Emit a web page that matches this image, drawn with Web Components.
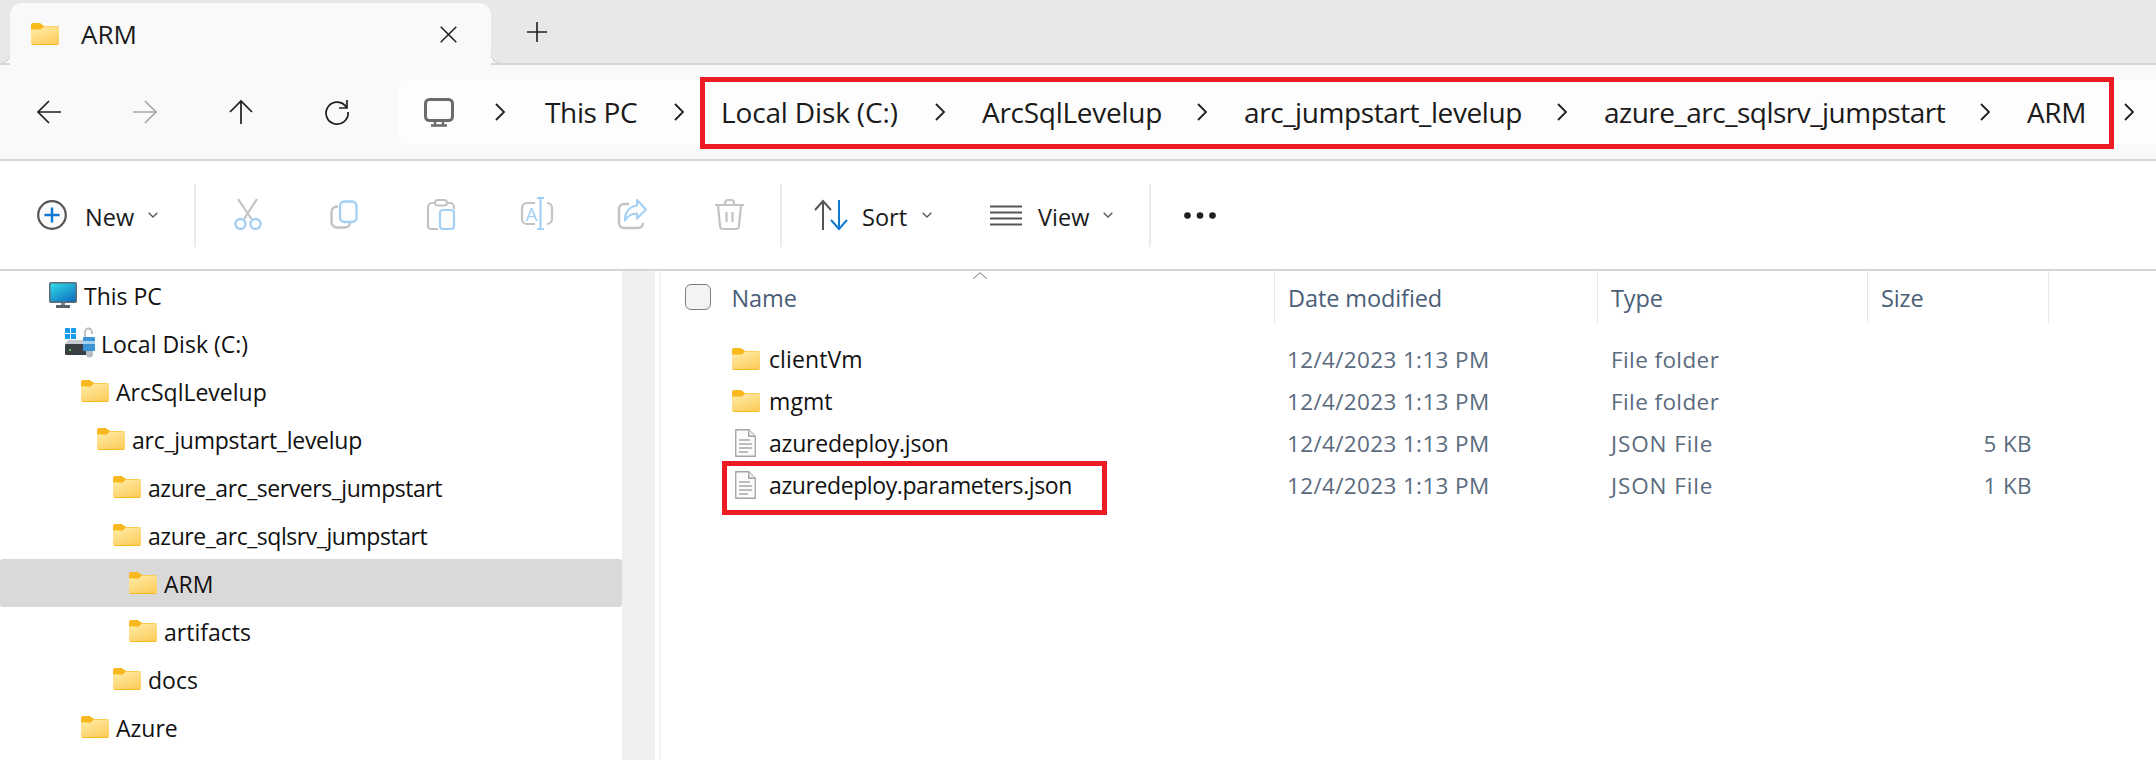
<!DOCTYPE html>
<html>
<head>
<meta charset="utf-8">
<title>ARM</title>
<style>
  html, body { margin: 0; height: 100%; overflow: hidden; background: white; }
  body { font-family: "Open Sans", "Liberation Sans", sans-serif; color: #1a1a1a; }
</style>
</head>
<body>
<explorer-window>
  <tab-strip slot="tabs"></tab-strip>
  <nav-bar slot="nav">
    <bread-crumb w="95" style="--pad:3px">This PC</bread-crumb>
    <bread-crumb w="177" style="letter-spacing:-0.15px">Local Disk (C:)</bread-crumb>
    <bread-crumb w="178" style="letter-spacing:-0.27px">ArcSqlLevelup</bread-crumb>
    <bread-crumb w="276" style="letter-spacing:-0.4px">arc_jumpstart_levelup</bread-crumb>
    <bread-crumb w="339" style="letter-spacing:-0.5px">azure_arc_sqlsrv_jumpstart</bread-crumb>
    <bread-crumb w="60">ARM</bread-crumb>
  </nav-bar>
  <tool-bar slot="tools"></tool-bar>
  <tree-pane slot="tree">
    <tree-row level="0" icon="pc">This PC</tree-row>
    <tree-row level="1" icon="disk">Local Disk (C:)</tree-row>
    <tree-row level="2" icon="folder">ArcSqlLevelup</tree-row>
    <tree-row level="3" icon="folder" style="letter-spacing:-0.25px">arc_jumpstart_levelup</tree-row>
    <tree-row level="4" icon="folder" style="letter-spacing:-0.45px">azure_arc_servers_jumpstart</tree-row>
    <tree-row level="4" icon="folder" style="letter-spacing:-0.45px">azure_arc_sqlsrv_jumpstart</tree-row>
    <tree-row level="5" icon="folder" selected>ARM</tree-row>
    <tree-row level="5" icon="folder">artifacts</tree-row>
    <tree-row level="4" icon="folder">docs</tree-row>
    <tree-row level="2" icon="folder">Azure</tree-row>
  </tree-pane>
  <file-list slot="files">
    <file-row icon="folder" date="12/4/2023 1:13 PM" type="File folder" style="letter-spacing:0.1px">clientVm</file-row>
    <file-row icon="folder" date="12/4/2023 1:13 PM" type="File folder" style="letter-spacing:0.1px">mgmt</file-row>
    <file-row icon="doc" date="12/4/2023 1:13 PM" type="JSON File" size="5 KB" style="letter-spacing:-0.2px">azuredeploy.json</file-row>
    <file-row icon="doc" date="12/4/2023 1:13 PM" type="JSON File" size="1 KB" style="letter-spacing:-0.4px">azuredeploy.parameters.json</file-row>
  </file-list>
</explorer-window>

<script>
const GRAY = "#c3c3c3";
const SKY = "#a5d0f3";

const ICONS = {
  folder: [28, 22, `
    <defs><linearGradient id="fg" x1="0.2" y1="0" x2="0.8" y2="1"><stop offset="0" stop-color="#ffeaa6"/><stop offset="1" stop-color="#fdcd5c"/></linearGradient></defs>
    <path d="M0 2a2 2 0 0 1 2-2h7l4 3h13a2 2 0 0 1 2 2v15a2 2 0 0 1-2 2H2a2 2 0 0 1-2-2z" fill="#f9b81e"/>
    <path d="M0 6.500h10l3-3h13.500a1.500 1.500 0 0 1 1.500 1.500V20a1 1 0 0 1-1 1H1a1 1 0 0 1-1-1z" fill="url(#fg)"/>`],
  doc: [21, 28, `
    <path d="M.75.75h13l6.500 6.500v20H.75z" fill="#fbfbfb" stroke="#a3a3a3" stroke-width="1.300"/>
    <path d="M13.750.75v6.500h6.500" fill="#ececec" stroke="#a3a3a3" stroke-width="1.300"/>
    <path d="M4 11h11M4 15h13M4 19h13M4 23h9" stroke="#bdbdbd" stroke-width="2"/>`],
  pc: [28, 26, `
    <defs><linearGradient id="sc" x1="0.1" y1="0" x2="0.8" y2="1"><stop offset="0" stop-color="#33d9e8"/><stop offset="1" stop-color="#0f72c0"/></linearGradient></defs>
    <rect x=".75" y=".75" width="26.500" height="19.500" rx="1" fill="url(#sc)" stroke="#5f6b75" stroke-width="1.500"/>
    <path d="M12 21h4v2h-4z" fill="#7c868e"/><path d="M7 23h14v3H7z" fill="#59636b"/>`],
  disk: [31, 32, `
    <path d="M0 1h5v5H0zM6 1h5v5H6zM0 7h5v5H0zM6 7h5v5H6z" fill="#1a9bec"/>
    <path d="M0 17l3-4h20v4z" fill="#c8ccd0"/>
    <rect x="0" y="17" width="26" height="11" rx="1" fill="#3a3f44"/>
    <circle cx="5" cy="23" r="1.100" fill="#5fe36a"/>
    <path d="M20 10V5a3.500 3.500 0 0 1 7 0v2" fill="none" stroke="#b6bcc2" stroke-width="1.800"/>
    <rect x="18" y="10" width="12" height="14" rx="1" fill="#3c94d6"/><path d="M18 14h12v3H18z" fill="#a7d3f2"/>
    <path d="M21 24h7v3a3 3 0 0 1-7 0z" fill="#b5bbc0"/>`],
  back: [24, 24, `<path d="M24 12H1M12 1 1 12l11 11" fill="none" stroke="#1f1f1f" stroke-width="1.700"/>`],
  forward: [24, 24, `<path d="M0 12h23M12 1l11 11-11 11" fill="none" stroke="#a8a8a8" stroke-width="1.700"/>`],
  up: [24, 24, `<path d="M12 24V1M1 12 12 1l11 11" fill="none" stroke="#1f1f1f" stroke-width="1.700"/>`],
  refresh: [24, 24, `<path d="M21.500 7.500A11 11 0 1 0 23 12" fill="none" stroke="#1f1f1f" stroke-width="1.700"/><path d="M22 0v8h-8" fill="none" stroke="#1f1f1f" stroke-width="1.700"/>`],
  monitor: [30, 29, `<rect x="1.500" y="1.500" width="27" height="21" rx="4" fill="none" stroke="#6b6b6b" stroke-width="3"/><path d="M11 23v4M19 23v4M7 27.500h16" fill="none" stroke="#6b6b6b" stroke-width="2.400"/>`],
  chevron: [10, 18, `<path d="M1 1l8 8-8 8" fill="none" stroke="#1f1f1f" stroke-width="1.800"/>`],
  close: [17, 17, `<path d="M.7.7l15.600 15.600M16.300.7.7 16.300" fill="none" stroke="#1f1f1f" stroke-width="1.500"/>`],
  plus: [20, 20, `<path d="M10 0v20M0 10h20" fill="none" stroke="#1f1f1f" stroke-width="1.600"/>`],
  caret: [10, 6, `<path d="M.7.7 5 5 9.300.7" fill="none" stroke="#555" stroke-width="1.300"/>`],
  sortcaret: [14, 7, `<path d="M.5 6.500 7 .7l6.500 5.800" fill="none" stroke="#6e6e6e" stroke-width="1"/>`],
  add: [30, 30, `<circle cx="15" cy="15" r="13.800" fill="#fafafa" stroke="#555" stroke-width="2.200"/><path d="M15 7.500v15M7.500 15h15" stroke="#0f78d4" stroke-width="2.400"/>`],
  cut: [28, 31, `<path d="M4 0l13.500 20M23 0 10 20" fill="none" stroke="${GRAY}" stroke-width="2.200"/><circle cx="6.500" cy="25" r="5" fill="none" stroke="${SKY}" stroke-width="2.400"/><circle cx="21.500" cy="25" r="5" fill="none" stroke="${SKY}" stroke-width="2.400"/>`],
  copy: [28, 29, `<path d="M8 6.500H7a5.500 5.500 0 0 0-5.500 5.500v10a5.500 5.500 0 0 0 5.500 5.500h8a5 5 0 0 0 5-5" fill="none" stroke="${GRAY}" stroke-width="2.400"/><rect x="10" y="1.500" width="16.500" height="20.500" rx="4.500" fill="#fdfdfd" stroke="${SKY}" stroke-width="2.400"/>`],
  paste: [28, 31, `<path d="M8 4H5a4 4 0 0 0-4 4v19a3 3 0 0 0 3 3h7M20 4h3a4 4 0 0 1 4 4v2" fill="none" stroke="${GRAY}" stroke-width="2.200"/><rect x="8" y="1" width="12" height="5.500" rx="2.700" fill="none" stroke="${GRAY}" stroke-width="2"/><rect x="13" y="11" width="14" height="19" rx="3" fill="#fdfdfd" stroke="${SKY}" stroke-width="2.200"/>`],
  rename: [32, 32, `<path d="M14 5H6a5 5 0 0 0-5 5v11a5 5 0 0 0 5 5h8M26 5a5 5 0 0 1 5 5v11a5 5 0 0 1-5 5" fill="none" stroke="${GRAY}" stroke-width="2.200"/><path d="M16 0h7M19.500 0v31M16 31h7" fill="none" stroke="${SKY}" stroke-width="2.200"/><text x="4.500" y="22.500" font-family="Open Sans" font-size="19" fill="${SKY}">A</text>`],
  share: [29, 30, `<path d="M11 5H6a5 5 0 0 0-5 5v14a5 5 0 0 0 5 5h14a5 5 0 0 0 5-5" fill="none" stroke="${GRAY}" stroke-width="2.400"/><path d="M19 1l9 9.500-9 9v-5c-6 0-9 2-12 7 0-8 4-14 12-15z" fill="#fdfdfd" stroke="${SKY}" stroke-width="2.200" stroke-linejoin="round"/>`],
  trash: [29, 31, `<path d="M0 6h29M10 6V4a3 3 0 0 1 3-3h3a3 3 0 0 1 3 3v2M3 6l2 21a3 3 0 0 0 3 3h13a3 3 0 0 0 3-3l2-21M11.500 13v10M17.500 13v10" fill="none" stroke="${GRAY}" stroke-width="2.200"/>`],
  sort: [34, 30, `<path d="M9 30V1M1 10l8-9 8 9" fill="none" stroke="#555" stroke-width="2"/><path d="M25 0v29M17 20l8 9 8-9" fill="none" stroke="#0f78d4" stroke-width="2"/>`],
  view: [32, 21, `<path d="M0 1.500h32M0 7.500h32M0 13.500h32M0 19.500h32" stroke="#555" stroke-width="2.200"/>`],
  dots: [32, 7, `<circle cx="3.500" cy="3.500" r="3.300" fill="#1f1f1f"/><circle cx="16" cy="3.500" r="3.300" fill="#1f1f1f"/><circle cx="28.500" cy="3.500" r="3.300" fill="#1f1f1f"/>`],
};

function icon(name) {
  const [w, h, body] = ICONS[name];
  return `<svg width="${w}" height="${h}" viewBox="0 0 ${w} ${h}" style="display:block;flex:none;overflow:visible">${body}</svg>`;
}

customElements.define("explorer-window", class extends HTMLElement {
  constructor() {
    super();
    this.shadow = this.attachShadow({ mode: "open" });
  }

  connectedCallback() {
    this.shadow.innerHTML = `
      <style>
        :host { display: flex; flex-direction: column; width: 2156px; height: 760px; overflow: hidden; background: white; }
        .body { flex: 1; display: flex; min-height: 0; }
      </style>
      <slot name="tabs"></slot>
      <slot name="nav"></slot>
      <slot name="tools"></slot>
      <div class="body">
        <slot name="tree"></slot>
        <slot name="files"></slot>
      </div>
    `;
  }
});

customElements.define("tab-strip", class extends HTMLElement {
  constructor() {
    super();
    this.shadow = this.attachShadow({ mode: "open" });
  }

  connectedCallback() {
    this.shadow.innerHTML = `
      <style>
        :host { display: flex; align-items: flex-end; box-sizing: border-box; height: 65px; background: #e8e8e8; border-bottom: 2px solid #d6d6d6; }
        .tab { position: relative; display: flex; align-items: center; box-sizing: border-box; width: 481px; height: 62px; margin-left: 10px; margin-bottom: -2px; padding: 0 34px 0 21px; background: #f9f9f9; border-radius: 12px 12px 0 0; }
        .tab::before, .tab::after { content: ""; position: absolute; bottom: 2px; width: 8px; height: 8px; }
        .tab::before { left: -8px; background: radial-gradient(circle at 0 0, transparent 7px, #d6d6d6 7px, #d6d6d6 8px, #f9f9f9 8px); }
        .tab::after { right: -8px; background: radial-gradient(circle at 100% 0, transparent 7px, #d6d6d6 7px, #d6d6d6 8px, #f9f9f9 8px); }
        .name { margin-left: 22px; font-size: 26px; }
        .x { margin-left: auto; }
        .plus { align-self: center; margin-left: 36px; }
      </style>
      <div class="tab">${icon("folder")}<span class="name">ARM</span><span class="x">${icon("close")}</span></div>
      <span class="plus">${icon("plus")}</span>
    `;
  }
});

customElements.define("nav-bar", class extends HTMLElement {
  constructor() {
    super();
    this.shadow = this.attachShadow({ mode: "open" });
  }

  connectedCallback() {
    this.shadow.innerHTML = `
      <style>
        :host { position: relative; display: flex; align-items: center; box-sizing: border-box; height: 96px; padding-left: 37px; background: #f9f9f9; border-bottom: 2px solid #d6d6d6; }
        .btns { display: flex; gap: 72px; }
        .addr { flex: 1; display: flex; align-items: center; gap: 37px; height: 64px; margin-left: 49px; padding-left: 26px; background: #fdfdfd; border-radius: 8px 0 0 8px; }
        .pc { margin-right: 4px; }
        ::slotted(bread-crumb) { flex: none; }
      </style>
      <div class="btns">${icon("back")}${icon("forward")}${icon("up")}${icon("refresh")}</div>
      <div class="addr"><span class="pc">${icon("monitor")}</span><slot></slot></div>
      <red-box style="left:700px;top:12px;width:1414px;height:72px"></red-box>
    `;
  }
});

customElements.define("bread-crumb", class extends HTMLElement {
  constructor() {
    super();
    this.shadow = this.attachShadow({ mode: "open" });
  }

  connectedCallback() {
    this.shadow.innerHTML = `
      <style>
        :host { display: flex; align-items: center; gap: 37px; font-size: 28px; letter-spacing: -0.35px; white-space: nowrap; }
        .label { box-sizing: border-box; width: ${this.getAttribute("w")}px; padding-left: var(--pad, 0); }
      </style>
      ${icon("chevron")}<span class="label"><slot></slot></span>
    `;
    if (!this.nextElementSibling) {
      const tail = document.createElement("span");
      tail.innerHTML = icon("chevron");
      this.shadow.appendChild(tail);
    }
  }
});

customElements.define("red-box", class extends HTMLElement {
  constructor() {
    super();
    this.shadow = this.attachShadow({ mode: "open" });
  }

  connectedCallback() {
    this.shadow.innerHTML = `
      <style>
        :host { position: absolute; box-sizing: border-box; border: 5px solid #ed1c24; }
      </style>
    `;
  }
});

customElements.define("tool-bar", class extends HTMLElement {
  constructor() {
    super();
    this.shadow = this.attachShadow({ mode: "open" });
  }

  connectedCallback() {
    const disabled = ["cut", "copy", "paste", "rename", "share", "trash"];
    this.shadow.innerHTML = `
      <style>
        :host { display: flex; align-items: center; box-sizing: border-box; height: 110px; padding-left: 37px; background: white; border-bottom: 2px solid #d6d6d6; font-size: 23.500px; }
        .cmd { display: flex; align-items: center; }
        .cmd span { position: relative; top: 2px; }
        .sep { width: 2px; height: 63px; background: #ececec; }
        .slot { width: 96.200px; display: flex; justify-content: center; }
        .lift { position: relative; top: -1px; }
      </style>
      <div class="cmd">${icon("add")}<span style="margin:0 14px 0 18px">New</span>${icon("caret")}</div>
      <div class="sep" style="margin:0 4px 0 36px"></div>
      ${disabled.map(n => `<div class="slot lift">${icon(n)}</div>`).join("")}
      <div class="sep" style="margin:0 32px 0 2.800px"></div>
      <div class="cmd">${icon("sort")}<span style="margin:0 15px 0 14px">Sort</span>${icon("caret")}</div>
      <div class="cmd" style="margin-left:58px">${icon("view")}<span style="margin:0 14px 0 16px">View</span>${icon("caret")}</div>
      <div class="sep" style="margin:0 33px 0 36px"></div>
      ${icon("dots")}
    `;
  }
});

customElements.define("tree-pane", class extends HTMLElement {
  constructor() {
    super();
    this.shadow = this.attachShadow({ mode: "open" });
  }

  connectedCallback() {
    this.shadow.innerHTML = `
      <style>
        :host { flex: none; display: flex; box-sizing: border-box; width: 661px; background: white; border-right: 2px solid #f2f2f2; }
        .rows { width: 622px; }
        .track { width: 33px; background: #efefef; }
      </style>
      <div class="rows"><slot></slot></div>
      <div class="track"></div>
    `;
  }
});

customElements.define("tree-row", class extends HTMLElement {
  constructor() {
    super();
    this.shadow = this.attachShadow({ mode: "open" });
  }

  connectedCallback() {
    const level = Number(this.getAttribute("level"));
    const name = this.getAttribute("icon");
    this.shadow.innerHTML = `
      <style>
        :host { display: flex; align-items: center; height: 48px; box-sizing: border-box; padding-top: 2px; padding-left: ${49 + 16 * level}px; font-size: 23px; letter-spacing: 0; color: #111; white-space: nowrap; border-radius: 3px; }
        :host([selected]) { background: #d9d9d9; }
        .ic { width: 28px; display: flex; flex: none; position: relative; top: -1px; margin-right: ${name === "disk" ? 8 : 7}px; }
      </style>
      <span class="ic">${icon(name)}</span><slot></slot>
    `;
  }
});

customElements.define("file-list", class extends HTMLElement {
  constructor() {
    super();
    this.shadow = this.attachShadow({ mode: "open" });
  }

  connectedCallback() {
    this.shadow.innerHTML = `
      <style>
        :host { position: relative; flex: 1; display: block; --cols: 614px 323px 270px 181px; }
        .head { display: grid; grid-template-columns: var(--cols); height: 52px; font-size: 23.500px; letter-spacing: -0.1px; color: #4a5e78; }
        .col { display: flex; align-items: center; box-sizing: border-box; padding: 2px 0 0 13px; border-right: 1.500px solid #e6e6e6; }
        .col.first { padding-left: 24px; }
        .check { box-sizing: border-box; width: 26px; height: 26px; margin: -2px 20.500px 0 0; border: 1.500px solid #7d7d7d; border-radius: 6px; background: #f3f3f3; }
        .sort { position: absolute; left: 312px; top: 1px; }
        .rows { margin-top: 15px; }
      </style>
      <div class="head">
        <div class="col first"><span class="check"></span>Name</div>
        <div class="col">Date modified</div>
        <div class="col">Type</div>
        <div class="col">Size</div>
      </div>
      <span class="sort">${icon("sortcaret")}</span>
      <div class="rows"><slot></slot></div>
      <red-box style="left:61px;top:190px;width:385px;height:54px"></red-box>
    `;
  }
});

customElements.define("file-row", class extends HTMLElement {
  constructor() {
    super();
    this.shadow = this.attachShadow({ mode: "open" });
  }

  connectedCallback() {
    const name = this.getAttribute("icon");
    this.shadow.innerHTML = `
      <style>
        :host { display: grid; grid-template-columns: var(--cols); align-items: center; height: 42px; font-size: 23px; letter-spacing: -0.3px; color: #111; white-space: nowrap; }
        .name { display: flex; align-items: center; padding-left: 70.500px; }
        .ic { width: 28px; flex: none; margin-right: 9.500px; display: flex; justify-content: ${name === "doc" ? "center" : "flex-start"}; }
        .meta { padding-left: 12px; font-size: 22.500px; letter-spacing: 0.35px; color: #5b6b7e; }
        .type { padding-left: 13px; letter-spacing: ${name === "doc" ? 0.9 : 0.4}px; }
        .size { padding-right: 17px; text-align: right; }
      </style>
      <div class="name"><span class="ic">${icon(name)}</span><slot></slot></div>
      <div class="meta">${this.getAttribute("date")}</div>
      <div class="meta type">${this.getAttribute("type")}</div>
      <div class="meta size">${this.getAttribute("size") || ""}</div>
    `;
  }
});
</script>
</body>
</html>
